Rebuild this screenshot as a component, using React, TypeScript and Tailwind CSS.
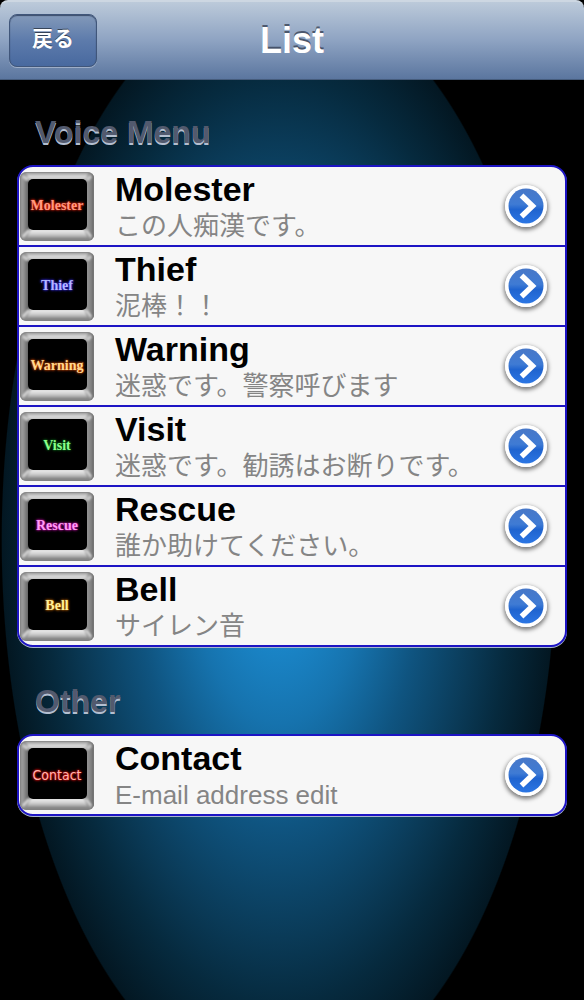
import React from "react";

type Item = {
  title: string;
  detail: string;
  keyClass: string;
};

const SERIF = "font-['Liberation_Serif',serif] text-[14px] font-bold";

const voices: Item[] = [
  {
    title: "Molester",
    detail: "この人痴漢です。",
    keyClass: `${SERIF} text-[#ff9a80] [text-shadow:0_0_3px_#ff2a10,0_0_2px_#d01808]`,
  },
  {
    title: "Thief",
    detail: "泥棒！！",
    keyClass: `${SERIF} text-[#b4b8ff] [text-shadow:0_0_3px_#3030ff,0_0_2px_#4a30e0]`,
  },
  {
    title: "Warning",
    detail: "迷惑です。警察呼びます",
    keyClass: `${SERIF} text-[#ffd890] [text-shadow:0_0_3px_#e05000,0_0_2px_#d04800]`,
  },
  {
    title: "Visit",
    detail: "迷惑です。勧誘はお断りです。",
    keyClass: `${SERIF} text-[#8cff8c] [text-shadow:0_0_3px_#108020,0_0_2px_#107020]`,
  },
  {
    title: "Rescue",
    detail: "誰か助けてください。",
    keyClass: `${SERIF} text-[#ff9cf4] [text-shadow:0_0_3px_#d010b0,0_0_2px_#c010b0]`,
  },
  {
    title: "Bell",
    detail: "サイレン音",
    keyClass: `${SERIF} text-[#fff09a] [text-shadow:0_0_3px_#d07000,0_0_2px_#b06000]`,
  },
];

const others: Item[] = [
  {
    title: "Contact",
    detail: "E-mail address edit",
    keyClass:
      "font-['DejaVu_Sans_Condensed','DejaVu_Sans',sans-serif] text-[14px] text-[#ffb4ac] [text-shadow:0_0_3px_#ff1010,0_0_2px_#ff1010]",
  },
];

function SharedGradients() {
  return (
    <svg className="absolute size-0" aria-hidden="true">
      <defs>
        <linearGradient id="keyLeft" x1="0" y1="0" x2="1" y2="0">
          <stop offset="0" stopColor="#6e6e6e" />
          <stop offset="0.35" stopColor="#a2a2a2" />
          <stop offset="1" stopColor="#4e4e4e" />
        </linearGradient>
        <linearGradient id="keyRight" x1="0" y1="0" x2="1" y2="0">
          <stop offset="0" stopColor="#9a9a9a" />
          <stop offset="0.5" stopColor="#858585" />
          <stop offset="1" stopColor="#555555" />
        </linearGradient>
        <linearGradient id="keyTop" x1="0" y1="0" x2="0" y2="1">
          <stop offset="0" stopColor="#8d8d8d" />
          <stop offset="0.5" stopColor="#dedede" />
          <stop offset="1" stopColor="#adadad" />
        </linearGradient>
        <linearGradient id="keyBottom" x1="0" y1="0" x2="0" y2="1">
          <stop offset="0" stopColor="#f4f4f4" />
          <stop offset="0.5" stopColor="#cccccc" />
          <stop offset="1" stopColor="#707070" />
        </linearGradient>
        <linearGradient id="discBlue" x1="0" y1="0" x2="0" y2="1">
          <stop offset="0" stopColor="#4878c8" />
          <stop offset="0.45" stopColor="#3f7bd4" />
          <stop offset="0.6" stopColor="#2064cf" />
          <stop offset="1" stopColor="#2b76e4" />
        </linearGradient>
        <clipPath id="keyShape">
          <rect width="74" height="69" rx="6" />
        </clipPath>
        <filter id="keySoft" x="-10%" y="-10%" width="120%" height="120%">
          <feGaussianBlur stdDeviation="0.9" />
        </filter>
      </defs>
    </svg>
  );
}

function KeyIcon({ item }: { item: Item }) {
  return (
    <span className="grid shrink-0 place-items-center">
      <svg
        className="col-start-1 row-start-1"
        width="74"
        height="69"
        viewBox="0 0 74 69"
        aria-hidden="true"
      >
        <g clipPath="url(#keyShape)">
          <rect width="74" height="69" fill="#8a8a8a" />
          <g filter="url(#keySoft)">
            <path d="M-2 -2L10 9V57L-2 71Z" fill="url(#keyLeft)" />
            <path d="M76 -2L65 9V57L76 71Z" fill="url(#keyRight)" />
            <path d="M5 0H69L65 9H10Z" fill="url(#keyTop)" />
            <path d="M5 68L11 57H64L69 68Z" fill="url(#keyBottom)" />
            <path d="M3 65L9 58M71 65L66 58" stroke="#e4e4e4" strokeWidth="2" />
            <path d="M3 4L8 8M71 4L67 8" stroke="#d0d0d0" strokeWidth="3" />
          </g>
        </g>
        <rect x="0.5" y="0.5" width="73" height="68" rx="6" fill="none" stroke="#808080" strokeOpacity="0.5" />
        <rect x="8" y="7" width="59" height="51" rx="5" fill="#000" />
      </svg>
      <span className={`col-start-1 row-start-1 leading-4 ${item.keyClass}`}>{item.title}</span>
    </span>
  );
}

function DisclosureButton({ label }: { label: string }) {
  return (
    <button
      type="button"
      aria-label={label}
      className="shrink-0 cursor-pointer rounded-full shadow-[0_2px_4px_1px_rgba(0,0,0,0.5)]"
    >
      <svg className="block" width="42" height="42" viewBox="0 0 42 42" aria-hidden="true">
        <circle cx="21" cy="21" r="21" fill="#fff" />
        <circle cx="21" cy="21" r="17.5" fill="url(#discBlue)" />
        <path d="M16.5 10.5L27.5 21L16.5 31.5" fill="none" stroke="#fff" strokeWidth="5.5" />
      </svg>
    </button>
  );
}

function Group({ heading, items }: { heading: string; items: Item[] }) {
  return (
    <section>
      <h2 className="pt-8 pb-[13px] pl-[18px] text-[32px] leading-10 font-bold text-[#525a6e] [text-shadow:0_2px_0_#b4bfd0]">
        {heading}
      </h2>
      <ul className="divide-y-2 divide-[#1d14c4] overflow-hidden rounded-2xl border-2 border-[#1d14c4] bg-[#f7f7f7] shadow-[0_1px_0_#a9b7cc]">
        {items.map((item) => (
          <li key={item.title} className="flex items-center gap-[21px] pr-[18px] pl-px">
            <KeyIcon item={item} />
            <div className="min-w-0 grow pt-[3px]">
              <h3 className="text-[34px] leading-[38px] font-bold text-black">{item.title}</h3>
              <p className="text-[26px] leading-[37px] text-[#858585]">{item.detail}</p>
            </div>
            <DisclosureButton label={`${item.title} details`} />
          </li>
        ))}
      </ul>
    </section>
  );
}

export default function App() {
  return (
    <div
      lang="ja"
      className="flex min-h-screen flex-col bg-black bg-[radial-gradient(ellipse_47.6%_55.4%_at_47.8%_54%,#1b8cd2_0%,#1a86c9_18%,#1673ae_33%,#0f5480_52%,#0a3a57_72%,#062a3e_84%,#031722_99.6%,#000_100%)] font-['Liberation_Sans','Noto_Sans_CJK_JP',sans-serif]"
    >
      <SharedGradients />
      <header className="grid h-20 grid-cols-[1fr_auto_1fr] items-center rounded-t-lg border-t-2 border-b border-t-[#cdd7e2] border-b-[#465c7c] bg-linear-to-b from-[#bccada] via-[#8ea3c2] to-[#5b769f] px-[9px]">
        <button
          type="button"
          className="h-[53px] w-[88px] cursor-pointer justify-self-start rounded-lg border border-[#40567a] bg-linear-to-b from-[#8399b9] via-[#5d7bab] to-[#48699f] pb-1 text-[21px] font-bold text-white shadow-[0_1px_0_rgba(255,255,255,0.35),inset_0_1px_1px_rgba(30,45,75,0.7)] [text-shadow:0_-1px_0_rgba(0,0,0,0.5)]"
        >
          戻る
        </button>
        <h1 className="text-[36px] leading-10 font-bold text-white [text-shadow:0_-2px_0_rgba(50,60,80,0.75)]">List</h1>
      </header>
      <main className="flex flex-col gap-0.5 px-[17px] pb-10">
        <Group heading="Voice Menu" items={voices} />
        <Group heading="Other" items={others} />
      </main>
    </div>
  );
}
